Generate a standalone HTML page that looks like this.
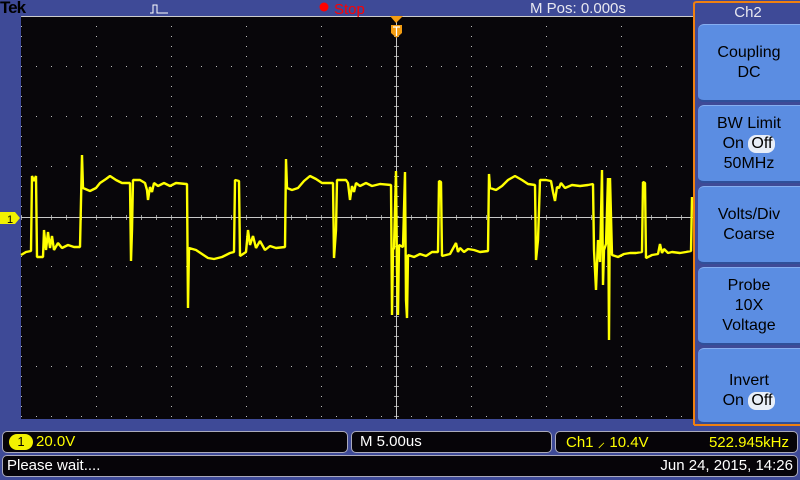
<!DOCTYPE html>
<html><head><meta charset="utf-8"><style>
body{margin:0;width:800px;height:480px;overflow:hidden;background:#3e4a97;font-family:"Liberation Sans",sans-serif;position:relative}
.abs{position:absolute}
.btn{position:absolute;left:698px;width:102px;background:#5b8de2;border-radius:6px 0 0 6px;border-top:1px solid #86aef0;border-bottom:2px solid #2f4f9a;color:#000;font-size:16px;text-align:center;line-height:20px;box-sizing:border-box;display:flex;flex-direction:column;justify-content:center}
.off{display:inline-block;background:#e8eef8;border-radius:8px;padding:0 3px;line-height:18px}
.bar{position:absolute;background:#060408;border:1px solid #aab;border-radius:5px;box-sizing:border-box;font-size:15px;line-height:20px;color:#ff0}
</style></head><body>
<svg class="abs" style="left:0;top:0" width="800" height="480">
<defs>
<pattern id="pv" x="21" y="16" width="75" height="10" patternUnits="userSpaceOnUse"><rect width="1" height="1" fill="#bbb"/></pattern>
<pattern id="ph" x="21" y="16" width="15" height="50" patternUnits="userSpaceOnUse"><rect width="1" height="1" fill="#bbb"/></pattern>
<pattern id="tk" x="21" y="0" width="15" height="10" patternUnits="userSpaceOnUse"><rect width="1" height="10" fill="#999"/></pattern>
<pattern id="tv" x="0" y="16" width="10" height="10" patternUnits="userSpaceOnUse"><rect width="10" height="1" fill="#999"/></pattern>
</defs>
<rect x="21" y="16" width="673" height="403" fill="#08060a"/>
<rect x="21" y="16" width="673" height="403" fill="url(#pv)"/>
<rect x="21" y="16" width="673" height="403" fill="url(#ph)"/>
<rect x="21" y="215" width="673" height="5" fill="url(#tk)"/>
<rect x="394" y="16" width="5" height="403" fill="url(#tv)"/>
<line x1="21" y1="16.5" x2="694" y2="16.5" stroke="#ccc"/>
<line x1="21" y1="217.5" x2="694" y2="217.5" stroke="#c8c8c8"/>
<line x1="396.5" y1="16" x2="396.5" y2="419" stroke="#c8c8c8"/>
<line x1="21.5" y1="16" x2="21.5" y2="419" stroke="#bbb" stroke-dasharray="1 9"/>
<polyline fill="none" stroke="#ffff00" stroke-width="2.4" stroke-linejoin="bevel" points="
21,255 26,252 31,251 32,176 34,181 36,176 37,257 43,257 44,230 46,250 48,232 50,248 52,236 54,250 58,243 62,248 68,245 74,247 80,247 82,155 83,188 90,191 96,188 100,183 106,179 110,176 116,180 122,183 128,183 130,183 131,261 132,230 133,180 140,180 145,183 147,190 148,200 150,187 152,192 154,183 158,186 164,183 170,186 176,183 186,184 187,184 188,308 189,248 196,250 202,254 208,258 214,259 222,257 230,253 234,252 235,180 239,181 240,256 246,252 248,230 250,245 253,236 256,248 260,241 265,250 270,246 276,248 285,247 286,159 287,188 292,190 298,188 304,181 310,176 316,179 322,183 333,183 334,258 336,230 337,180 346,180 348,183 350,200 352,186 354,192 356,183 360,186 366,183 372,186 380,184 391,185 392,315 393,250 394,248 396,171 397,270 398,315 399,245 403,247 405,172 406,300 407,318 408,255 414,257 420,254 426,256 432,252 438,252 439,181 441,182 442,256 450,254 456,243 458,252 460,248 464,252 468,249 474,250 480,252 488,251 489,174 490,188 496,190 502,186 508,180 515,176 522,180 528,184 535,185 536,260 538,240 540,180 546,180 551,181 553,192 555,201 557,187 559,188 561,183 565,188 572,185 580,186 588,185 593,184 594,250 596,290 598,240 600,262 602,170 603,285 604,250 606,244 608,178 609,340 610,178 612,255 618,257 624,254 630,253 636,253 642,252 643,182 645,183 646,258 652,255 658,254 660,244 662,253 664,249 668,253 672,252 680,253 686,252 691,251 692,197"/>
<polygon points="0,212 15,212 20,218 15,224 0,224" fill="#f2f200"/>
<text x="7" y="223" font-family="Liberation Sans" font-size="11" fill="#000">1</text>
<polygon points="390,16 403,16 396,23" fill="#f39c12"/>
<path d="M391,25 h11 v8 l-5.5,5 l-5.5,-5z" fill="#f39c12"/>
<path d="M393,27 h7 M396.5,27 v9" stroke="#fff" stroke-width="1.2"/>
<path d="M150,13 h3 v-8 h4 v8 h3 h8" stroke="#fff" fill="none" stroke-width="1"/>
<circle cx="324" cy="7" r="4.5" fill="#f00"/>
<path d="M694,425 V4 Q694,2 697,2 H800" stroke="#f08010" stroke-width="2" fill="none"/>
<path d="M694,425 H800" stroke="#f08010" stroke-width="2"/>
</svg>
<div class="abs" style="left:0;top:-2px;font-size:17px;font-weight:bold;color:#000;letter-spacing:-1px">Tek</div>
<div class="abs" style="left:334px;top:1px;font-size:15px;color:#f00;line-height:17px">Stop</div>
<div class="abs" style="left:530px;top:0;font-size:15px;color:#e8e8f0;line-height:17px">M Pos: 0.000s</div>
<div class="abs" style="left:696px;top:4px;width:104px;text-align:center;color:#e8e8f0;font-size:15px;line-height:18px">Ch2</div>
<div class="btn" style="top:24px;height:78px">Coupling<br>DC</div>
<div class="btn" style="top:105px;height:78px">BW Limit<br><span>On <span class="off">Off</span></span>50MHz</div>
<div class="btn" style="top:186px;height:78px">Volts/Div<br>Coarse</div>
<div class="btn" style="top:267px;height:78px">Probe<br>10X<br>Voltage</div>
<div class="btn" style="top:348px;height:76px;padding-top:10px">Invert<br><span>On <span class="off">Off</span></span></div>
<div class="bar" style="left:2px;top:431px;width:346px;height:22px"><span style="position:absolute;left:6px;top:2px;width:24px;height:16px;background:#f2f200;border-radius:8px;color:#000;text-align:center;line-height:16px;font-size:13px">1</span><span style="position:absolute;left:33px;top:0">20.0V</span></div>
<div class="bar" style="left:351px;top:431px;width:201px;height:22px;color:#fff;padding-left:8px">M 5.00us</div>
<div class="bar" style="left:555px;top:431px;width:243px;height:22px"><span style="position:absolute;left:10px;top:1px">Ch1 ⸝ 10.4V</span><span style="position:absolute;right:8px;top:1px">522.945kHz</span></div>
<div class="bar" style="left:2px;top:455px;width:796px;height:22px;color:#fff"><span style="position:absolute;left:4px;top:0">Please wait....</span><span style="position:absolute;right:4px;top:0">Jun 24, 2015, 14:26</span></div>
</body></html>
